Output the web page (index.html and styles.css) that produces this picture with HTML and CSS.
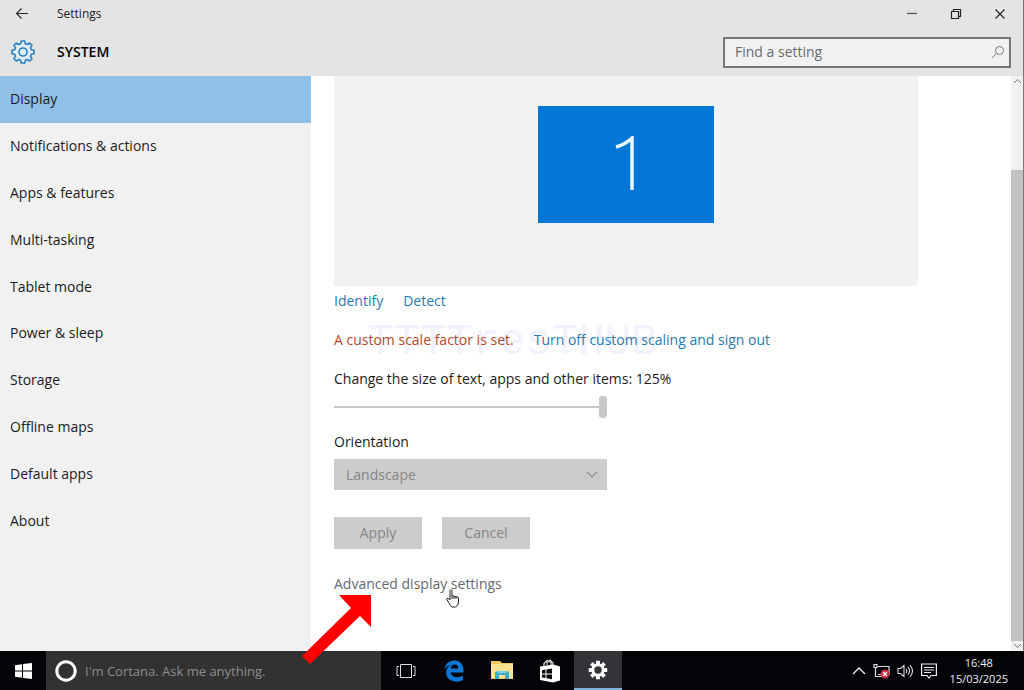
FILE: index.html
```html
<!DOCTYPE html>
<html lang="en">
<head>
<meta charset="utf-8">
<title>Settings</title>
<link rel="stylesheet" href="styles.css">
</head>
<body>
<div class="desktop">
  <div class="window">
    <header class="titlebar">
      <button class="icon-btn back" aria-label="Back"><svg width="14" height="12" viewBox="0 0 14 12"><path d="M13 5.500H1.500M6.500 .5L1.500 5.500l5 5" fill="none" stroke="#222" stroke-width="1.100"/></svg></button>
      <span class="app-name">Settings</span>
      <div class="controls">
        <button class="icon-btn" aria-label="Minimise"><svg width="12" height="12" viewBox="0 0 12 12"><path d="M1 5.500h10" stroke="#555" stroke-width="1.300"/></svg></button>
        <button class="icon-btn" aria-label="Restore"><svg width="12" height="12" viewBox="0 0 12 12"><path d="M1.500 3.500h7v7h-7zM3.500 3.500v-2h7v7h-2" fill="none" stroke="#222" stroke-width="1.200"/></svg></button>
        <button class="icon-btn" aria-label="Close"><svg width="12" height="12" viewBox="0 0 12 12"><path d="M1.500 1.500l9 9M10.500 1.500l-9 9" stroke="#222" stroke-width="1.100"/></svg></button>
      </div>
    </header>
    <div class="heading">
      <svg class="gear" width="26" height="26" viewBox="-13 -13 26 26"><g fill="none" stroke="#2380c4" stroke-width="1.600" stroke-linejoin="round"><path d="M-1.700 -11L1.700 -11L2.300 -8.300L4.300 -7.500L6.700 -9L9 -6.700L7.500 -4.300L8.300 -2.300L11 -1.700L11 1.700L8.300 2.300L7.500 4.300L9 6.700L6.700 9L4.300 7.500L2.300 8.300L1.700 11L-1.700 11L-2.300 8.300L-4.300 7.500L-6.700 9L-9 6.700L-7.500 4.300L-8.300 2.300L-11 1.700L-11 -1.700L-8.300 -2.300L-7.500 -4.300L-9 -6.700L-6.700 -9L-4.300 -7.500L-2.300 -8.300Z" fill="#e0edf7"/><circle r="4"/></g></svg>
      <h1>SYSTEM</h1>
      <label class="search">
        <input type="search" placeholder="Find a setting" aria-label="Find a setting">
        <svg width="14" height="14" viewBox="0 0 14 14"><circle cx="8.500" cy="5.500" r="4" fill="none" stroke="#777"/><path d="M5.500 8.500L1 13" stroke="#777"/></svg>
      </label>
    </div>
    <div class="body">
      <div class="sidebar">
        <nav>
          <a class="current" href="#">Display</a>
          <a href="#">Notifications &amp; actions</a>
          <a href="#">Apps &amp; features</a>
          <a href="#">Multi-tasking</a>
          <a href="#">Tablet mode</a>
          <a href="#">Power &amp; sleep</a>
          <a href="#">Storage</a>
          <a href="#">Offline maps</a>
          <a href="#">Default apps</a>
          <a href="#">About</a>
        </nav>
      </div>
      <main>
        <div class="preview"><div class="monitor"><svg width="24" height="56" viewBox="0 0 24 56" role="img" aria-label="Display 1"><path d="M18 54V2Q12 8 2 11" fill="none" stroke="#e8f6ff" stroke-width="3.500"/></svg></div></div>
        <div class="links"><a href="#">Identify</a><a href="#">Detect</a></div>
        <div class="links scale"><span class="watermark" aria-hidden="true">TTTTresTHUB</span><span class="warning">A custom scale factor is set.</span><a href="#">Turn off custom scaling and sign out</a></div>
        <label class="field" for="size">Change the size of text, apps and other items: 125%</label>
        <input class="slider" id="size" type="range" min="100" max="125" value="125">
        <label class="field" for="orientation">Orientation</label>
        <div class="select"><select id="orientation" disabled><option>Landscape</option></select><svg width="12" height="8" viewBox="0 0 12 8"><path d="M1 1l5 5 5-5" fill="none" stroke="#8c8c8c" stroke-width="1.200"/></svg></div>
        <div class="actions"><button disabled>Apply</button><button disabled>Cancel</button></div>
        <a class="advanced" href="#">Advanced display settings</a>
      </main>
      <div class="scrollbar">
        <svg width="9" height="10" viewBox="0 0 9 10"><path d="M1 7l3.500-3.500L8 7" fill="none" stroke="#777"/></svg>
        <div class="thumb"></div>
        <svg width="9" height="10" viewBox="0 0 9 10"><path d="M1 3l3.500 3.500L8 3" fill="none" stroke="#777"/></svg>
      </div>
    </div>
  </div>
  <footer class="taskbar">
    <button class="start" aria-label="Start"><svg width="17" height="16" viewBox="0 0 17 16" fill="#fff"><path d="M0 2.300L7 1.300V7.600H0zM8 1.100L17 0V7.600H8zM0 8.500H7V14.700L0 13.700zM8 8.500H17V16L8 14.900z"/></svg></button>
    <label class="cortana"><svg width="24" height="24" viewBox="0 0 24 24"><circle cx="12" cy="12" r="9.200" fill="none" stroke="#fff" stroke-width="3"/></svg><input type="text" placeholder="I'm Cortana. Ask me anything." aria-label="Ask Cortana"></label>
    <div class="apps">
      <button aria-label="Task view"><svg width="20" height="16" viewBox="0 0 20 16" fill="none" stroke="#ddd"><path d="M4.500 1.500h11v13h-11zM3 3.500H1v9h2M17 3.500h2v9h-2"/></svg></button>
      <button aria-label="Edge"><svg width="20" height="22" viewBox="0 0 20 22"><path d="M.3 9.700C1 4.300 4.800.5 10.200.5c5.800 0 9.300 4 9.300 9.600v2.400H6.700c.3 3.100 3 4.700 6.300 4.700 2.300 0 4.300-.6 5.900-1.600v4.300c-2 1-4.200 1.500-6.800 1.500-6 0-9.900-3.500-9.900-8.900 0-3.500 1.900-6.600 5.200-8.200C4.500 5.400 1.900 7 .3 9.700zM6.900 8.500h7.200c0-2.300-1.100-3.900-3.500-3.900-2.200 0-3.400 1.500-3.700 3.900z" fill="#0f78d4"/></svg></button>
      <button aria-label="File Explorer"><svg width="22" height="19" viewBox="0 0 22 19"><path d="M0 0h9l2 2h11v16H0z" fill="#eec85a"/><path d="M0 3h22v14H0z" fill="#fce394"/><path d="M4 18v-7l2-1h10l2 1v7h-4v-4H8v4z" fill="#36b0ce"/><path d="M6 10h10l-1 2H7z" fill="#75d5e6"/></svg></button>
      <button aria-label="Store"><svg width="22" height="24" viewBox="0 0 22 24"><path d="M5 8V4.500L8 1.500l4 2V6M8 6V3.500L11 1l3 3v2" fill="none" stroke="#ddd" stroke-width="1.200"/><path d="M1 7.500l13-2 7 2v14l-7 2-13-2.500z" fill="#fff"/><path d="M3 11.200l3.500-.6v3.900H3zM7.500 10.400l5.500-.9v5H7.500zM3 15.500h3.500v3.600L3 18.500zM7.500 15.500H13v4.700l-5.500-.9z" fill="#080808"/></svg></button>
      <button class="active" aria-label="Settings"><svg width="20" height="20" viewBox="-13 -13 26 26"><g fill="#fff"><path id="tooth" d="M-2.500 -12h5v6h-5z"/><use href="#tooth" transform="rotate(45)"/><use href="#tooth" transform="rotate(90)"/><use href="#tooth" transform="rotate(135)"/><use href="#tooth" transform="rotate(180)"/><use href="#tooth" transform="rotate(225)"/><use href="#tooth" transform="rotate(270)"/><use href="#tooth" transform="rotate(315)"/></g><circle r="6.700" fill="#323438" stroke="#fff" stroke-width="3.800"/></svg></button>
    </div>
    <div class="tray">
      <svg width="14" height="9" viewBox="0 0 14 9"><path d="M1 8l6-6 6 6" fill="none" stroke="#eee" stroke-width="1.300"/></svg>
      <svg width="17" height="16" viewBox="0 0 17 16"><path d="M5 3.500h11v8H5M1 1.500h3v3H1zM2.500 5v8.500h5M5 13.500h4" fill="none" stroke="#ddd" stroke-width="1.200"/><circle cx="12" cy="11" r="4.500" fill="#c8283c"/><path d="M10 9l4 4M14 9l-4 4" stroke="#fff" stroke-width="1.300"/></svg>
      <svg width="17" height="14" viewBox="0 0 17 14" fill="none" stroke="#ddd" stroke-width="1.100"><path d="M1 4.500h2.500L7 1.500v11L3.500 9.500H1zM9 5q1.500 2 0 4M11 3q3 4 0 8M13 1q5 6 0 12"/></svg>
      <svg width="16" height="16" viewBox="0 0 16 16" fill="none" stroke="#eee" stroke-width="1.200"><path d="M.6 1h14.800v11.500H10L8 15l-2-2.500H.6zM3 4.500h10M3 7h10M3 9.500h7"/></svg>
      <div class="clock"><time>16:48</time><time>15/03/2025</time></div>
    </div>
  </footer>
  <svg class="hand" width="16" height="20" viewBox="0 0 16 20"><path d="M5 12V2.500q1-2 2 0V8q1-1 2 .5 1-1 2 .5 2-1 2.500 1v4q0 4-3 5H7q-2-1-3-4L1.500 11q1-2 3.500 1zM7 8v3M9 8.500V11M11 9v2" fill="#fff" stroke="#222"/></svg>
  <svg class="arrow" width="70" height="70" viewBox="0 0 70 70"><path d="M37 0H69V32L58 21L8 69L0 61L49 13z" fill="#fe0000"/></svg>
</div>
</body>
</html>
```
FILE: styles.css
```css
* { box-sizing: border-box; }
body { margin: 0; font: 14px/20px "Open Sans", "Noto Sans", sans-serif; color: #1c1c1c; }
button, input, select { font: inherit; color: inherit; border: 0; border-radius: 0; margin: 0; padding: 0; background: none; }
a { color: inherit; text-decoration: none; }
svg { display: block; flex: none; }
.desktop { position: relative; display: flex; flex-direction: column; min-height: 100vh; }
.window { flex: 1; display: flex; flex-direction: column; border-right: 1px solid #777; background: #fff; }
.titlebar { display: flex; align-items: center; height: 28px; background: #e4e4e4; }
.icon-btn { display: grid; place-items: center; width: 44px; height: 28px; }
.app-name { margin-left: 13px; font-size: 12px; }
.controls { display: flex; margin-left: auto; padding-right: 1px; }
.heading { display: flex; align-items: center; height: 48px; padding: 0 12px 0 10px; background: #e4e4e4; }
h1 { margin: 0 0 0 21px; font-size: 14px; font-weight: 600; color: #000; }
.search { display: flex; align-items: center; width: 288px; height: 31px; margin-left: auto; padding: 0 4px 0 10px; border: 2px solid #767676; background: #f1f1f1; }
.search input { flex: 1; min-width: 0; outline: 0; }
.search input::placeholder { color: #6b6b6b; opacity: 1; }
.body { flex: 1; display: flex; }
.sidebar { width: 311px; background: #f1f1f1; }
nav { display: grid; grid-auto-rows: 1fr; height: 468px; }
nav a { display: flex; align-items: center; padding: 0 10px; }
nav .current { background: #90c0e5; }
main { flex: 1; padding: 0 23px; }
.preview { display: grid; place-items: center; max-width: 584px; height: 210px; padding-bottom: 34px; background: #f2f2f2; }
.monitor { display: grid; place-items: center; width: 176px; height: 117px; background: #0277d8; }
.links { display: flex; gap: 20px; margin-top: 5px; color: #2a7ab0; }
.links.scale { position: relative; z-index: 0; margin-top: 19px; }
.watermark { position: absolute; z-index: -1; left: 33px; top: -10px; font: 44px/44px "Liberation Mono", monospace; color: #f2f2fd; }
.warning { color: #b5482c; }
.field { display: block; margin-top: 19px; }
.slider { display: block; appearance: none; width: 273px; height: 24px; margin-top: 6px; background: linear-gradient(#c8c8c8, #c8c8c8) center / 100% 2px no-repeat; }
.slider::-webkit-slider-thumb { appearance: none; width: 8px; height: 22px; border-radius: 3px; background: #c8c8c8; }
.slider + .field { margin-top: 13px; }
.select { position: relative; width: 273px; margin-top: 7px; }
.select select { display: block; appearance: none; width: 100%; height: 31px; padding: 0 12px; background: #ccc; color: #858585; opacity: 1; }
.select svg { position: absolute; right: 9px; top: 12px; }
.actions { display: flex; gap: 20px; margin: 27px 0 25px; }
.actions button { width: 88px; height: 32px; background: #ccc; color: #858585; }
.advanced { color: #66696e; }
.scrollbar { display: flex; flex-direction: column; align-items: center; width: 12px; background: #f1f1f1; }
.thumb { flex: 1; width: 12px; margin-top: 84px; background: #c2c2c2; }
.taskbar { display: flex; height: 39px; background: #030408; color: #eee; }
.start { display: grid; place-items: center; width: 46px; }
.cortana { display: flex; align-items: center; gap: 7px; width: 335px; padding-left: 8px; background: #323232; font-size: 13px; }
.cortana input { flex: 1; min-width: 0; outline: 0; }
.cortana input::placeholder { color: #8e8e8e; opacity: 1; }
.apps { display: flex; padding-left: 1px; }
.apps button { display: grid; place-items: center; width: 48px; }
.apps .active { background: #323438; border-bottom: 2px solid #80b4de; }
.tray { display: flex; align-items: center; gap: 7px; margin-left: auto; padding-right: 16px; }
.clock { display: flex; flex-direction: column; align-items: center; margin-left: 6px; font-size: 11px; line-height: 16px; }
.hand { position: absolute; left: 445px; top: 588px; }
.arrow { position: absolute; left: 302px; top: 595px; }
```
